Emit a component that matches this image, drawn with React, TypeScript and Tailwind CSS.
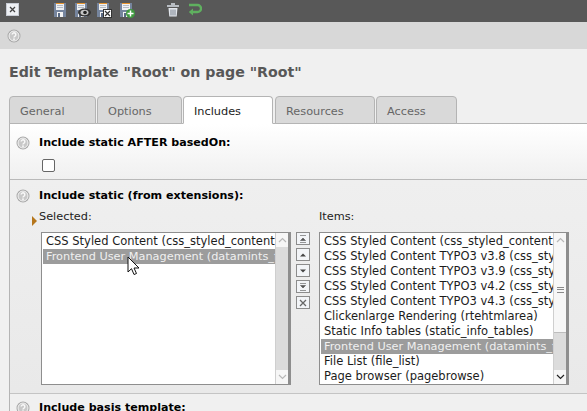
import React from "react";

const allItems = [
  "CSS Styled Content (css_styled_content)",
  "CSS Styled Content TYPO3 v3.8 (css_styled_content)",
  "CSS Styled Content TYPO3 v3.9 (css_styled_content)",
  "CSS Styled Content TYPO3 v4.2 (css_styled_content)",
  "CSS Styled Content TYPO3 v4.3 (css_styled_content)",
  "Clickenlarge Rendering (rtehtmlarea)",
  "Static Info tables (static_info_tables)",
  "Frontend User Management (datamints_feuser)",
  "File List (file_list)",
  "Page browser (pagebrowse)",
];

function Help({ className = "" }: { className?: string }) {
  return (
    <svg width="14" height="14" viewBox="0 0 14 14" className={className}>
      <circle cx="7" cy="7" r="6.5" fill="#a8a8a8" />
      <circle cx="7" cy="7" r="5" fill="#c8c8c8" stroke="#f4f4f4" strokeWidth="1" />
      <path d="M5.2 5.6a1.8 1.8 0 1 1 2.8 1.5c-.7.4-1 .7-1 1.4" fill="none" stroke="#f8f8f8" strokeWidth="1.5" />
      <rect x="6.2" y="9.4" width="1.6" height="1.6" fill="#f8f8f8" />
    </svg>
  );
}

function Disk({ children }: { children?: React.ReactNode }) {
  return (
    <span className="relative block w-[12px] h-[14px]">
      <svg width="12" height="14" viewBox="0 0 12 14" className="block">
        <path d="M0 0h12v14H0z" fill="#76859e" />
        <rect x="2" y="0" width="8" height="1" fill="#e8952e" />
        <rect x="2" y="1" width="8" height="6" fill="#eef0f2" />
        <path d="M3 2.500h6M3 4.500h6" stroke="#b4bac4" strokeWidth="1" />
        <rect x="3" y="9" width="6" height="5" fill="#f4f4f4" />
        <rect x="4" y="10" width="2" height="4" fill="#5a6a84" />
      </svg>
      {children}
    </span>
  );
}

function ToolbarIcons() {
  return (
    <div className="flex items-start h-[22px] pt-[3px]">
      <span className="w-[13px] h-[13px] ml-[6px] bg-[#eef0f4] border border-[#c8ccd4] flex items-center justify-center">
        <svg width="7" height="7" viewBox="0 0 7 7">
          <path d="M1 1l5 5M6 1l-5 5" stroke="#444" strokeWidth="1.3" />
        </svg>
      </span>
      <span className="ml-[35px]"><Disk /></span>
      <span className="ml-[9px]">
        <Disk>
          <svg width="13" height="9" viewBox="0 0 13 9" className="absolute left-[3px] top-[5px]">
            <ellipse cx="6.500" cy="4.500" rx="6.500" ry="4" fill="#333" />
            <ellipse cx="6.500" cy="4.500" rx="4" ry="2.800" fill="#c4c4c4" />
            <circle cx="7" cy="4.500" r="1.800" fill="#222" />
          </svg>
        </Disk>
      </span>
      <span className="ml-[10px]">
        <Disk>
          <span className="absolute left-[6px] top-[6px] w-[9px] h-[9px] bg-white border border-[#333] flex items-center justify-center">
            <svg width="7" height="7" viewBox="0 0 7 7">
              <path d="M1 1l5 5M6 1l-5 5" stroke="#333" strokeWidth="1.200" />
            </svg>
          </span>
        </Disk>
      </span>
      <span className="ml-[11px]">
        <Disk>
          <span className="absolute left-[6px] top-[6px] w-[9px] h-[9px] rounded-full bg-[#3f9b3f] flex items-center justify-center">
            <svg width="7" height="7" viewBox="0 0 7 7">
              <path d="M3.500 .5v6M.5 3.500h6" stroke="#fff" strokeWidth="1.500" />
            </svg>
          </span>
        </Disk>
      </span>
      <svg width="14" height="14" viewBox="0 0 14 14" className="ml-[34px]">
        <path d="M5 1h4M1 3h12" stroke="#d8dee6" strokeWidth="1.600" />
        <path d="M2.500 5h9l-.8 8.500H3.300z" fill="#e2e6ec" />
        <path d="M5 6.500v6M7 6.500v6M9 6.500v6" stroke="#7c8490" strokeWidth="1" />
      </svg>
      <svg width="14" height="14" viewBox="0 0 14 14" className="ml-[8px]">
        <path d="M1 2h8.500a3.500 3.500 0 0 1 0 7H3" fill="none" stroke="#5fb05f" strokeWidth="2.400" />
        <path d="M5 5.500L.8 9 5 12.500z" fill="#5fb05f" />
      </svg>
    </div>
  );
}

function ScrollArrow({ up, dark }: { up?: boolean; dark?: boolean }) {
  return (
    <span className="h-[14px] bg-[#f6f6f6] flex items-center justify-center shrink-0">
      <svg width="9" height="6" viewBox="0 0 9 6">
        <path
          d={up ? "M1 5l3.500-3.500L8 5" : "M1 1l3.500 3.500L8 1"}
          fill="none"
          stroke={dark ? "#222" : "#b8b8b8"}
          strokeWidth="1.200"
        />
      </svg>
    </span>
  );
}

function ListBox({
  items,
  selected,
  thumb,
}: {
  items: string[];
  selected: number;
  thumb?: boolean;
}) {
  return (
    <div className="flex w-[250px] h-[153px] bg-white border border-[#8e8e8e]">
      <div className="flex-1 min-w-0 overflow-hidden pl-[1px] pt-[1px] bg-white">
        {items.map((item, index) => (
          <div
            key={item}
            className={
              "h-[15px] leading-[15px] pl-[3px] whitespace-nowrap overflow-hidden " +
              (index === selected ? "text-[11.3px] bg-[#9c9c9c] text-[#f0f0f0]" : "text-[11.5px] text-[#1c1c1c]")
            }
          >
            {item}
          </div>
        ))}
      </div>
      <div className="w-[15px] shrink-0 flex flex-col border-l border-[#cfcfcf] border-r-2 border-r-[#8e8e8e] bg-[#dcdcdc]">
        <ScrollArrow up />
        {thumb ? (
          <div className="flex-1 flex flex-col">
            <div className="h-[86px] bg-[#f7f7f7] flex items-center justify-center border-b border-[#bdbdbd]">
              <span className="w-[7px] h-[6px] border-y border-[#8a8a8a] flex items-center">
                <span className="w-full h-px bg-[#8a8a8a]" />
              </span>
            </div>
            <div className="flex-1 bg-[#dcdcdc]" />
          </div>
        ) : (
          <div className="flex-1 bg-[#dcdcdc]" />
        )}
        <ScrollArrow dark={thumb} />
      </div>
    </div>
  );
}

function MoveButton({ kind }: { kind: "top" | "up" | "down" | "bottom" | "remove" }) {
  return (
    <span className="w-[14px] h-[13px] bg-[#f2f4f7] border border-[#8c8c8c] flex items-center justify-center">
      <svg width="8" height="8" viewBox="0 0 8 8">
        {kind === "top" && <path d="M1 .5h6M4 3L6.500 5.500h-5z M1 7.500h6" stroke="#555" fill="#555" strokeWidth=".6" />}
        {kind === "up" && <path d="M4 2.500L7 5.500H1z" fill="#444" />}
        {kind === "down" && <path d="M4 5.500L1 2.500h6z" fill="#444" />}
        {kind === "bottom" && <path d="M1 .5h6M4 5L1.500 2.500h5z M1 7.500h6" stroke="#555" fill="#555" strokeWidth=".6" />}
        {kind === "remove" && <path d="M1 1l6 6M7 1L1 7" stroke="#666" strokeWidth="1.300" />}
      </svg>
    </span>
  );
}

function SectionHeader({ title }: { title: string }) {
  return (
    <div className="flex items-center h-[16px]">
      <Help className="ml-[6px] mr-[9px]" />
      <span className="text-[11.1px] font-bold text-black">{title}</span>
    </div>
  );
}

const tabs = [
  { label: "General", width: "w-[87px]", gap: "" },
  { label: "Options", width: "w-[85px]", gap: "ml-px" },
  { label: "Includes", width: "w-[90px]", gap: "ml-px", active: true },
  { label: "Resources", width: "w-[100px]", gap: "ml-[2px]" },
  { label: "Access", width: "w-[81px]", gap: "ml-px" },
];

export default function App() {
  return (
    <div className="w-[587px] h-[411px] overflow-hidden bg-[#f0f0f0] text-[11px] font-['DejaVu_Sans',Verdana,sans-serif]">
      <div className="h-[22px] bg-[#585858]">
        <ToolbarIcons />
      </div>
      <div className="h-[27px] bg-[#d8d8d8] flex items-center pl-[7px]">
        <Help />
      </div>

      <h1 className="mt-[14px] ml-[9px] h-[18px] leading-[18px] text-[14.2px] font-bold text-[#585858]">
        Edit Template "Root" on page "Root"
      </h1>

      <div className="flex mt-[15px] ml-[9px] h-[28px]">
        {tabs.map((tab) => (
          <div
            key={tab.label}
            className={
              tab.width +
              " " +
              tab.gap +
              " h-[28px] pl-[10px] pt-[7px] leading-[15px] border border-[#b4b4b4] rounded-t-[4px] text-[11.3px] " +
              (tab.active ? "bg-white border-b-white text-[#222] z-10" : "bg-[#d9d9d9] text-[#666]")
            }
          >
            {tab.label}
          </div>
        ))}
      </div>

      <div className="-mt-px ml-[9px] border-l border-t border-[#b4b4b4]">
        <div className="h-[56px] pt-[11px] bg-gradient-to-b from-white to-[#f0f0f0] border-b border-[#b9b9b9]">
          <SectionHeader title="Include static AFTER basedOn:" />
          <span className="block mt-[8px] ml-[32px] w-[13px] h-[13px] bg-white border border-[#666] rounded-[2px]" />
        </div>
        <div className="h-[214px] pt-[8px] bg-gradient-to-b from-[#efefef] to-[#e9e9e9] border-b border-[#c4c4c4]">
          <SectionHeader title="Include static (from extensions):" />
          <div className="flex mt-[5px] ml-[31px]">
            <div className="w-[278px] relative">
              <span className="absolute left-[-9px] top-[7px] w-0 h-0 border-y-[5px] border-y-transparent border-l-[5px] border-l-[#b5761c]" />
              <div className="h-[15px] -ml-[2px] leading-[15px] text-[11.3px] text-[#222]">Selected:</div>
              <div className="mt-[8px] relative">
                <ListBox
                  items={["CSS Styled Content (css_styled_content)", "Frontend User Management (datamints_feuser)"]}
                  selected={1}
                />
                <svg width="13" height="20" viewBox="0 0 13 20" className="absolute left-[86px] top-[24px]">
                  <path d="M1 1v15l3.500-3.300 2.500 5.800 2.500-1-2.500-5.500h5z" fill="#fff" stroke="#111" strokeWidth="1" />
                </svg>
              </div>
            </div>
            <div className="w-[0px]">
              <div className="h-[15px] text-[11.3px] text-[#222] leading-[15px] whitespace-nowrap">Items:</div>
              <div className="mt-[8px]">
                <ListBox items={allItems} selected={7} thumb />
              </div>
            </div>
            <div className="flex flex-col gap-[3px] mt-[23px] -ml-[23px]">
              <MoveButton kind="top" />
              <MoveButton kind="up" />
              <MoveButton kind="down" />
              <MoveButton kind="bottom" />
              <MoveButton kind="remove" />
            </div>
          </div>
        </div>
        <div className="pt-[6px]">
          <SectionHeader title="Include basis template:" />
        </div>
      </div>
    </div>
  );
}
